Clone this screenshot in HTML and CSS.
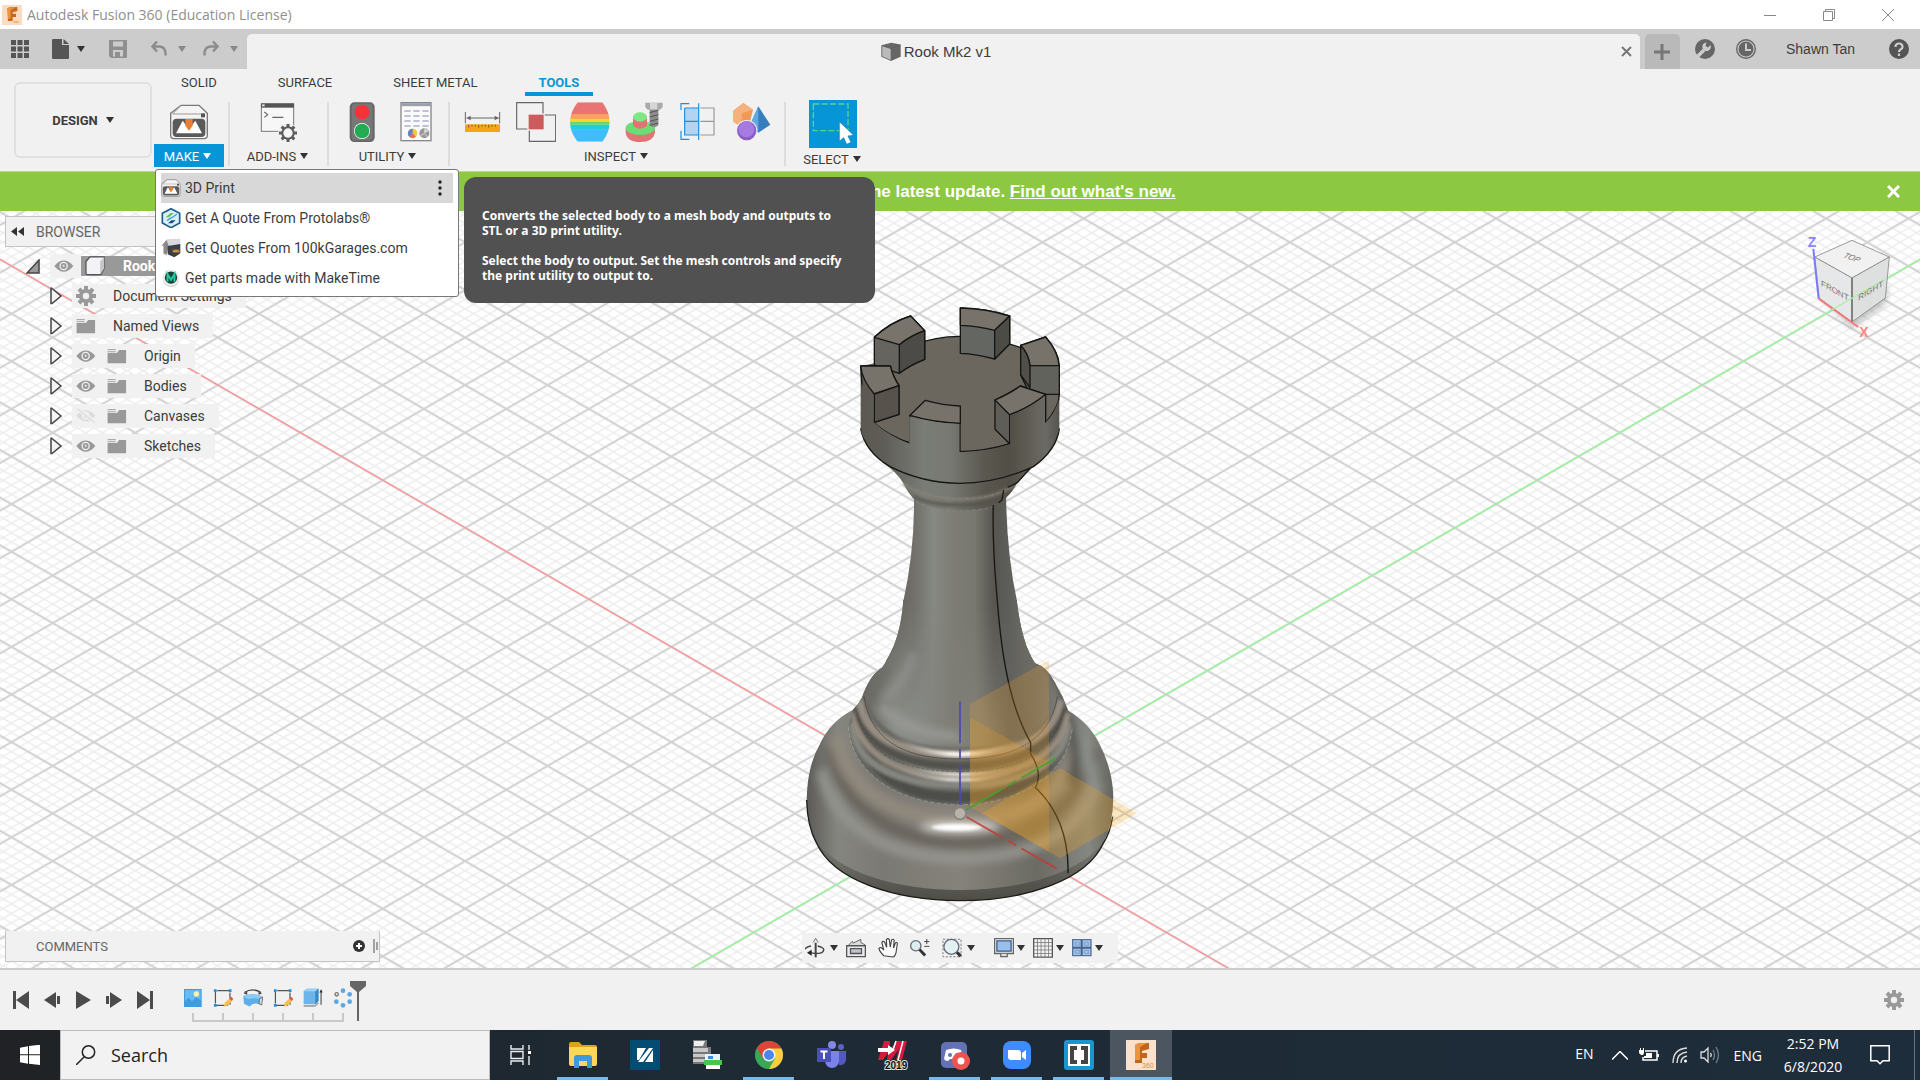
FILE: index.html
```html
<!DOCTYPE html>
<html lang="en">
<head>
<meta charset="utf-8">
<title>Autodesk Fusion 360 (Education License)</title>
<link rel="stylesheet" href="styles.css">
</head>
<body>
<svg class="defs" aria-hidden="true">
  <symbol id="eye" viewBox="228 415 62 46"><path fill="#999" d="M229 438Q258 404 288 438Q258 474 229 438Z"/><circle cx="258" cy="438" r="13" fill="#f1f1f1"/><circle cx="258" cy="438" r="9" fill="#999"/><circle cx="258" cy="437" r="3" fill="#f1f1f1"/></symbol>
  <symbol id="eye-off" viewBox="228 595 62 48"><path fill="#ddd" d="M229 618Q258 584 288 618Q258 654 229 618Z"/><circle cx="258" cy="618" r="12" fill="#f1f1f1"/><circle cx="258" cy="618" r="8" fill="#ddd"/><path d="M232 596L290 640" stroke="#f1f1f1" stroke-width="12"/><path d="M232 596L286 640" stroke="#ddd" stroke-width="4"/></symbol>
  <symbol id="folder" viewBox="320 412 66 52"><path fill="#999" d="M322 428h31l7-10h23v44h-61z"/><path d="M322 417h27M322 424h27" stroke="#999" stroke-width="3"/></symbol>
  <symbol id="gear" viewBox="0 0 20 20"><path d="M10 0v20M0 10h20M3 3l14 14M17 3L3 17" stroke="#999" stroke-width="4"/><circle cx="10" cy="10" r="5" fill="none" stroke="#999" stroke-width="4"/><circle cx="10" cy="10" r="3.2" fill="#f1f1f1"/></symbol>
  <symbol id="arrow" viewBox="0 0 14 20"><path d="M2 2.5Q2 1.500 3 2.500L12 10L3 17.500H2Z" fill="#f4f4f4" stroke="#444" stroke-width="1.500"/></symbol>
  <symbol id="printer" viewBox="510 312 120 112"><path d="M546 318h54l25 24v66q0 10-10 10h-90q-10 0-10-10v-66z" fill="#f4f4f4" stroke="#777" stroke-width="4"/><path d="M546 318l-25 26h86" fill="none" stroke="#999" stroke-width="3"/><rect x="606" y="342" width="12" height="12" fill="#555"/><rect x="521" y="358" width="98" height="55" rx="12" fill="#5a5a5a"/><path d="M531 402l20-38 19 26 19-26 20 38z" fill="#fff"/><path d="M559 359h22v20l-11 15-11-15z" fill="#e77e35"/></symbol>
  <symbol id="sketch" viewBox="634 202 66 66"><path d="M642 211h48v48h-48z" fill="none" stroke="#555" stroke-width="4" stroke-dasharray="40 8" stroke-dashoffset="-6"/><path d="M637 206h9v9h-9zM686 206h9v9h-9zM637 255h9v9h-9z" fill="#1790e6"/><path d="M670 264l3-14 18-16 9 8-18 18z" fill="#f9bd52"/><path d="M688 237l6-6 7 7-6 6z" fill="#ec4b4b"/></symbol>
</svg>

<div class="app">
  <header class="titlebar">
    <svg class="i20" viewBox="6 12 60 60"><rect x="6" y="12" width="60" height="60" fill="#fbdcc0"/><path d="M22 22l8-4h22v12l-14 4v4h10v10H38v12H24z" fill="#c9661d"/><path d="M24 22l6-3h18l-16 8v26h-8z" fill="#eb9440"/><path d="M40 63h16" stroke="#eda060" stroke-width="4"/></svg>
    <span class="apptitle">Autodesk Fusion 360 (Education License)</span>
    <div class="winctl">
      <button aria-label="Minimize"><svg class="i12" viewBox="0 0 12 12"><path d="M0 6.500h12" stroke="#888"/></svg></button>
      <button aria-label="Restore"><svg class="i12" viewBox="0 0 12 12" fill="none" stroke="#888"><path d="M.5 2.500h9v9h-9zM2.500 2.500v-2h9v9h-2"/></svg></button>
      <button aria-label="Close window"><svg class="i12" viewBox="0 0 12 12"><path d="M0 0l12 12M12 0L0 12" stroke="#888"/></svg></button>
    </div>
  </header>

  <div class="tabbar">
    <div class="quick">
      <button aria-label="Data panel"><svg class="i18" viewBox="0 0 18 18" fill="#555"><path d="M0 0h5v5H0zM6.500 0h5v5h-5zM13 0h5v5h-5zM0 6.500h5v5H0zM6.500 6.500h5v5h-5zM13 6.500h5v5h-5zM0 13h5v5H0zM6.500 13h5v5h-5zM13 13h5v5h-5z"/></svg></button>
      <button class="withcaret file" aria-label="File"><svg width="17" height="20" viewBox="0 0 17 20" fill="#555"><path d="M0 1q0-1 1-1h9v6h7v13q0 1-1 1H1q-1 0-1-1zM11.500 0L17 5h-5.500z"/></svg><i class="caret"></i></button>
      <button class="save" aria-label="Save"><svg class="i18" viewBox="0 0 18 18"><path d="M0 0h18v18H2l-2-2z" fill="#8f8f8f"/><path d="M4 1.500h10v5H4zM4 10h10v6.500H4z" fill="#ccc"/><path d="M4 8h10M6 12h5v5H6z" fill="#8f8f8f"/></svg></button>
      <button class="withcaret dim undo" aria-label="Undo"><svg width="16" height="15" viewBox="0 0 16 15" fill="none" stroke="#8c8c8c" stroke-width="2.500"><path d="M6 0.500L1.500 5.500l4.500 5M1.500 5.500H8q7 0 6.500 9"/></svg><i class="caret"></i></button>
      <button class="withcaret dim" aria-label="Redo"><svg width="16" height="15" viewBox="0 0 16 15" fill="none" stroke="#8c8c8c" stroke-width="2.500"><path d="M10 .5l4.500 5-4.500 5M14.500 5.500H8q-7 0-6.500 9"/></svg><i class="caret"></i></button>
    </div>
    <div class="doctab">
      <span class="docname"><svg class="i20" viewBox="122 124 62 60"><path d="M123 133l31-8 29 6v38l-30 13-30-13z" fill="#666"/><path d="M126 136l26 9v34l-26-12z" fill="#bbb"/><path d="M153 144l30-12" stroke="#555"/></svg>Rook Mk2 v1</span>
      <button aria-label="Close document"><svg width="11" height="11" viewBox="0 0 11 11"><path d="M1 1l9 9M10 1l-9 9" stroke="#777" stroke-width="2"/></svg></button>
    </div>
    <button class="newtab" aria-label="New design"><svg width="16" height="16" viewBox="0 0 16 16"><path d="M8 0v16M0 8h16" stroke="#777" stroke-width="3"/></svg></button>
    <div class="account">
      <button aria-label="Extensions"><svg class="i20" viewBox="0 0 20 20"><circle cx="10" cy="10" r="10" fill="#666"/><path d="M0 20l9-9" stroke="#ccc" stroke-width="3.500"/><path d="M15.500 6a4.300 4.300 0 1 1-4-2.500L10.500 7l2.500 1.500z" fill="#ccc"/></svg></button>
      <button aria-label="Job status"><svg class="i20" viewBox="0 0 20 20"><circle cx="10" cy="10" r="9.300" fill="none" stroke="#666" stroke-width="1.400"/><circle cx="10" cy="10" r="7.500" fill="#666"/><path d="M10 4.500V11h5" fill="none" stroke="#ccc" stroke-width="2"/></svg></button>
      <a href="#" class="user">Shawn Tan</a>
      <button class="help" aria-label="Help"><svg class="i20" viewBox="0 0 20 20"><circle cx="10" cy="10" r="10" fill="#555"/><path d="M6.500 8q0-3.500 3.500-3.500T13.500 8q0 1.500-2 2.500-1.500 1-1.500 2.500M10 14.500v2.500" fill="none" stroke="#ccc" stroke-width="2.200"/></svg></button>
    </div>
  </div>

  <div class="ribbon">
    <button class="workspace">DESIGN <i class="caret"></i></button>
    <div class="tools">
      <nav class="tabs"><a href="#">SOLID</a><a href="#">SURFACE</a><a href="#">SHEET METAL</a><a href="#" class="on">TOOLS</a></nav>
      <div class="groups">
        <div class="group make">
          <div class="icons"><svg class="i40" viewBox="510 308 120 120"><use href="#printer" x="510" y="312" width="120" height="112"/></svg></div>
          <button class="glabel active">MAKE<i class="caret"></i></button>
          <div class="menu">
            <button class="on"><svg class="i20" viewBox="510 308 120 120"><use href="#printer" x="510" y="312" width="120" height="112"/></svg>3D Print<svg class="dots" width="4" height="16" viewBox="0 0 4 16" fill="#222"><circle cx="2" cy="2" r="1.700"/><circle cx="2" cy="8" r="1.700"/><circle cx="2" cy="14" r="1.700"/></svg></button>
            <button><svg class="i20" viewBox="482 624 56 60"><path d="M510 626l26 14v29l-26 14-26-14v-29z" fill="#d9f0fb" stroke="#1c5f8b" stroke-width="5"/><path d="M494 652l15-13h9l-14 13z" fill="#6dbb52"/><path d="M501 670l10-9h13l-10 9z" fill="#234d78"/><path d="M498 662l14-10M512 654l16-12" stroke="#3da4d8" stroke-width="4"/></svg>Get A Quote From Protolabs&reg;</button>
            <button><svg class="i20" viewBox="482 714 60 60"><path d="M483 738l17-20 40-2v20h-20l-18 6-4 26-10-6v-23z" fill="#d6d8db"/><path d="M483 738l16-18 6 18-6 26-9-4v-24z" fill="#888"/><path d="M502 738l38-6v28l-18 12-20-9z" fill="#3d3d45"/><path d="M513 746h26v12l-20 2z" fill="#554f58"/><path d="M517 752q12-6 20 0v5h-20z" fill="#d69324"/></svg>Get Quotes From 100kGarages.com</button>
            <button><svg class="i20" viewBox="484 806 54 58"><circle cx="511" cy="837" r="24" fill="#ccc"/><circle cx="511" cy="834" r="24" fill="#eee"/><circle cx="511" cy="834" r="18" fill="#183d3a"/><path d="M501 846v-22l10 16 10-16v22" fill="none" stroke="#21c998" stroke-width="6"/></svg>Get parts made with MakeTime</button>
          </div>
        </div>
        <div class="group addins">
          <div class="icons"><svg class="i40" viewBox="778 308 120 120"><rect x="785" y="314" width="97" height="82" fill="#f7f7f7" stroke="#777" stroke-width="3"/><rect x="784" y="312" width="99" height="13" fill="#555"/><path d="M787 315h8v6h-8z" fill="#ddd"/><path d="M794 338l10 8-10 8M818 354h33" stroke="#666" stroke-width="3.500" fill="none"/><circle cx="865" cy="401" r="30" fill="#f1f1f1"/><path d="M865 374v54M838 401h54M846 382l38 38M884 382l-38 38" stroke="#5c5c5c" stroke-width="9"/><circle cx="865" cy="401" r="20" fill="#5c5c5c"/><circle cx="865" cy="401" r="14" fill="#f5f5f5"/></svg></div>
          <button class="glabel">ADD-INS<i class="caret"></i></button>
        </div>
        <div class="group utility">
          <div class="icons">
            <svg class="i40" viewBox="1027 308 120 120"><rect x="1050" y="309" width="75" height="119" rx="14" fill="#666"/><rect x="1056" y="313" width="63" height="110" rx="10" fill="#777"/><circle cx="1087" cy="338" r="22" fill="#fa3238"/><circle cx="1087" cy="395" r="24" fill="#fff"/><circle cx="1087" cy="395" r="22" fill="#22ab52"/></svg>
            <svg class="i40" viewBox="1187 308 120 120"><rect x="1202" y="310" width="90" height="114" fill="#fafafa" stroke="#888" stroke-width="4"/><path d="M1203 316h88" stroke="#9a9fb0" stroke-width="9"/><path d="M1212 335h74M1212 350h74M1212 365h74M1212 380h74" stroke="#aab0c6" stroke-width="4" stroke-dasharray="19 8"/><circle cx="1237" cy="402" r="14" fill="#f3c742"/><path d="M1237 402v-14a14 14 0 0 0-9 25z" fill="#6782c8"/><path d="M1237 402l-9 11a14 14 0 0 0 18-1z" fill="#e66a55"/><circle cx="1272" cy="402" r="15" fill="#999"/><path d="M1272 402v-15l13 8z" fill="#ddd"/><path d="M1272 402l-12 8M1272 402l10 11" stroke="#eee" stroke-width="2"/></svg>
          </div>
          <button class="glabel">UTILITY<i class="caret"></i></button>
        </div>
        <div class="group inspect">
          <div class="icons">
            <svg class="i40" viewBox="70 128 120 120"><path d="M80 158v34M183 158v34M84 176h96" stroke="#666" stroke-width="3"/><path d="M84 176l12-7v14zM180 176l-12-7v14z" fill="#666"/><rect x="79" y="195" width="105" height="23" fill="#f7a416"/><path d="M90 196v9M100 196v6M110 196v6M120 196v9M130 196v6M140 196v6M150 196v9M160 196v6M170 196v6" stroke="#6e5520" stroke-width="2.500"/></svg>
            <svg class="i40" viewBox="232 128 120 120"><path d="M234 130h79v79h-79zM272 167h79v79h-79z" fill="none" stroke="#666" stroke-width="3.500"/><path d="M266 162h52v52h-52z" fill="#f1f1f1"/><path d="M270 166h45v44h-45z" fill="#cd5b5b"/></svg>
            <svg class="i40" viewBox="394 128 120 120"><clipPath id="zebra"><path d="M417 129h74q44 60 0 118h-74q-46-58 0-118z"/></clipPath><g clip-path="url(#zebra)"><path fill="#ea7474" d="M390 128h130v38H390z"/><path fill="#fda060" d="M390 165h130v14H390z"/><path fill="#f3d826" d="M390 179h130v9H390z"/><path fill="#63d86f" d="M390 188h130v8H390z"/><path fill="#19cfe0" d="M390 196h130v15H390z"/><path fill="#41bdfd" d="M390 210h130v40H390z"/></g></svg>
            <svg class="i40" viewBox="555 128 120 120"><path d="M560 206v14q4 28 44 28 38 0 44-28v-14z" fill="#e07474"/><ellipse cx="604" cy="206" rx="44" ry="21" fill="#6edc75"/><path d="M582 172v28q20 16 42 0v-28z" fill="#e07474"/><ellipse cx="603" cy="173" rx="21" ry="14" fill="#7ee884"/><path d="M632 148h26v50q-12 12-26 0z" fill="#8c8c8c"/><path d="M632 160l26-7M632 173l26-7M632 186l26-7M632 198l26-7" stroke="#555" stroke-width="3"/><path d="M619 130h52v13l-8 8h-37l-7-8z" fill="#aaa"/><path d="M633 130h22v20h-22z" fill="#d5d5d5"/></svg>
            <svg class="i40" viewBox="716 128 120 120"><path d="M736 146h42v81h-42z" fill="#b3d3f0"/><path d="M783 146h41v81h-41M783 186h41" fill="none" stroke="#999" stroke-width="3.500"/><path d="M778 132v110M736 146h42M736 146v81h42M736 186h42M725 152v-19h25M725 214v26h25" fill="none" stroke="#1d8fe0" stroke-width="3.500"/></svg>
            <svg class="i40" viewBox="878 128 120 120"><path d="M912 131l29 20-8 33-28 18-23-15v-33z" fill="#f19a58"/><path d="M912 131l29 20-33 10-26-7zM908 161l-3 41-23-15v-33z" fill="#f5b27e"/><path d="M957 141l36 55-36 24-26-21z" fill="#367ebd"/><path d="M957 141l-26 58 26 21z" fill="#62a9e4"/><circle cx="922" cy="214" r="32" fill="#f1f1f1"/><circle cx="922" cy="214" r="29" fill="#8c5cc8"/><circle cx="921" cy="210" r="24" fill="#a57be2"/></svg>
          </div>
          <button class="glabel">INSPECT<i class="caret"></i></button>
        </div>
        <div class="group select">
          <div class="icons"><svg class="i48" viewBox="1105 117 144 144"><path fill="#0696d7" d="M1105 117h144v144h-144z"/><path d="M1118 129h104v80h-104z" fill="none" stroke="#5dd08d" stroke-width="4" stroke-dasharray="18 7"/><path d="M1196 182v59l13-11 9 20 13-6-9-19 17-2z" fill="#fff" stroke="#0f7fb4" stroke-width="2"/></svg></div>
          <button class="glabel">SELECT<i class="caret"></i></button>
        </div>
      </div>
    </div>
    <div class="tooltip" role="tooltip">
      <p>Converts the selected body to a mesh body and outputs to STL or a 3D print utility.</p>
      <p>Select the body to output. Set the mesh controls and specify the print utility to output to.</p>
    </div>
  </div>

  <div class="banner">
    <p>the latest update. <a href="#">Find out what's new.</a></p>
    <button aria-label="Dismiss"><svg width="13" height="13" viewBox="0 0 13 13"><path d="M1 1l11 11M12 1L1 12" stroke="#fff" stroke-width="3"/></svg></button>
  </div>

  <main class="viewport">
    <svg class="scene" viewBox="0 211 1920 757" preserveAspectRatio="xMidYMid slice" role="img" aria-label="Rook model on grid">
      <defs>
        <pattern id="grid" width="10" height="10" patternUnits="userSpaceOnUse" patternTransform="matrix(4.124 2.380 -4.124 2.380 960 813.500)">
          <path d="M2 0v10M4 0v10M6 0v10M8 0v10M0 2h10M0 4h10M0 6h10M0 8h10" stroke="#ededed" stroke-width=".36"/>
          <path d="M0 0v10M10 0v10M0 0h10M0 10h10" stroke="#d2d2d2" stroke-width=".5"/>
        </pattern>
        <linearGradient id="wall" x1="242" x2="838" y1="0" y2="0" gradientUnits="userSpaceOnUse"><stop offset="0" stop-color="#5b5851"/><stop offset=".12" stop-color="#5f5d57"/><stop offset=".32" stop-color="#7a7c76"/><stop offset=".45" stop-color="#777972"/><stop offset=".62" stop-color="#5b5850"/><stop offset=".75" stop-color="#514e45"/><stop offset=".93" stop-color="#6c6a64"/><stop offset="1" stop-color="#55544f"/></linearGradient>
        <linearGradient id="stem" x1="350" x2="740" y1="0" y2="0" gradientUnits="userSpaceOnUse"><stop offset="0" stop-color="#66645e"/><stop offset=".13" stop-color="#706f6a"/><stop offset=".28" stop-color="#868882"/><stop offset=".45" stop-color="#7d7b74"/><stop offset=".6" stop-color="#77776f"/><stop offset=".75" stop-color="#565550"/><stop offset=".88" stop-color="#5f605c"/><stop offset="1" stop-color="#6f6d67"/></linearGradient>
        <linearGradient id="flare" x1="250" x2="830" y1="0" y2="0" gradientUnits="userSpaceOnUse"><stop offset="0" stop-color="#6a6964"/><stop offset=".17" stop-color="#8c8e88"/><stop offset=".3" stop-color="#888a85"/><stop offset=".45" stop-color="#7f7d76"/><stop offset=".6" stop-color="#7f7f78"/><stop offset=".75" stop-color="#64635e"/><stop offset=".85" stop-color="#676661"/><stop offset="1" stop-color="#7c7c77"/></linearGradient>
        <linearGradient id="base" x1="80" x2="1000" y1="0" y2="0" gradientUnits="userSpaceOnUse"><stop offset="0" stop-color="#5b5a56"/><stop offset=".1" stop-color="#85857f"/><stop offset=".25" stop-color="#7b7973"/><stop offset=".5" stop-color="#85827b"/><stop offset=".75" stop-color="#6b6a63"/><stop offset=".92" stop-color="#858781"/><stop offset="1" stop-color="#65655f"/></linearGradient>
        <linearGradient id="shade" x1="0" x2="0" y1="1630" y2="1835" gradientUnits="userSpaceOnUse"><stop offset="0" stop-color="#4b4943" stop-opacity="0"/><stop offset="1" stop-color="#4b4943" stop-opacity=".95"/></linearGradient>
        <linearGradient id="shine" x1="200" x2="880" y1="0" y2="0" gradientUnits="userSpaceOnUse"><stop offset=".2" stop-color="#aaa69e" stop-opacity="0"/><stop offset=".46" stop-color="#fffdf8"/><stop offset=".54" stop-color="#fffdf8"/><stop offset=".75" stop-color="#aaa69e" stop-opacity="0"/></linearGradient>
        <linearGradient id="fade" x1="0" x2="0" y1="940" y2="1300" gradientUnits="userSpaceOnUse"><stop offset="0" stop-color="#fff"/><stop offset="1" stop-color="#000"/></linearGradient>
        <mask id="fadeDown" maskUnits="userSpaceOnUse" x="200" y="880" width="700" height="460"><path d="M200 880h700v460H200z" fill="url(#fade)"/></mask>
        <filter id="b3" filterUnits="userSpaceOnUse" x="0" y="400" width="1100" height="1500"><feGaussianBlur stdDeviation="4"/></filter>
        <filter id="b9" filterUnits="userSpaceOnUse" x="0" y="400" width="1100" height="1500"><feGaussianBlur stdDeviation="12"/></filter>
        <clipPath id="baseClip"><path id="baseShape" d="M370 930C365 1010 345 1070 320 1110Q312 1130 300 1138Q268 1160 245 1225Q235 1245 218 1260Q150 1295 120 1362Q82 1425 80 1530Q82 1610 110 1660C160 1770 340 1832 540 1832S920 1770 970 1660Q1000 1600 1000 1520Q998 1440 960 1365Q930 1300 865 1262Q850 1220 825 1178Q800 1130 765 1120Q725 1060 710 930Z"/></clipPath>
      </defs>
      <rect x="-2000" y="-1000" width="6000" height="4000" fill="#fff"/>
      <rect x="-2000" y="-1000" width="6000" height="4000" fill="url(#grid)"/>
      <path d="M-60 224.600L2040 1436.600" stroke="#ff9494" stroke-width="1.300"/>
      <path d="M-120 1436.600L1980 224.600" stroke="#92f892" stroke-width="1.300"/>

      <g transform="translate(780 290) scale(.33333)">
        <!-- foot and stem -->
        <use href="#baseShape" fill="url(#base)"/>
        <g clip-path="url(#baseClip)">
          <path d="M60 1560C100 1740 340 1800 540 1800S980 1740 1020 1560V1900H60Z" fill="url(#shade)"/>
          <g fill="none" filter="url(#b9)">
            <path d="M150 1370C170 1560 380 1660 540 1660S870 1600 950 1380" stroke="#68645b" stroke-width="34"/>
            <path d="M170 1340C190 1510 370 1590 540 1590S840 1540 890 1370" stroke="#91897e" stroke-width="44"/>
            <path d="M125 1440C160 1620 340 1705 540 1705S900 1640 950 1480" stroke="#94948f" stroke-width="32"/>
            <path d="M860 1290Q950 1380 930 1540" stroke="#8d918c" stroke-width="30"/>
            <path d="M850 1260Q910 1380 870 1480" stroke="#55544f" stroke-width="30"/>
          </g>
          <ellipse cx="540" cy="1610" rx="120" ry="17" fill="#d8d5cf" filter="url(#b9)"/>
          <ellipse cx="530" cy="1612" rx="75" ry="10" fill="#fff" filter="url(#b3)"/>
          <!-- rings above the foot -->
          <path d="M205 1310C215 1460 370 1545 540 1545S865 1460 877 1310L830 1150L540 900L250 1150Z" fill="#666661"/>
          <g fill="none" filter="url(#b3)">
            <path d="M235 1340C290 1480 410 1522 540 1522S800 1480 850 1340" stroke="#4e4d48" stroke-width="30"/>
            <path d="M215 1300C225 1440 380 1486 540 1486S855 1440 865 1300" stroke="#85867f" stroke-width="20"/>
            <path d="M222 1270C235 1410 390 1461 540 1461S850 1410 862 1270" stroke="#968c80" stroke-width="18"/>
            <path d="M230 1250C245 1385 400 1428 540 1428S830 1385 850 1250" stroke="#52514c" stroke-width="20"/>
            <path d="M240 1230C255 1360 400 1394 540 1394S820 1360 840 1230" stroke="#978e83" stroke-width="24"/>
          </g>
          <path d="M370 900C365 1010 345 1070 320 1110Q270 1150 255 1220Q290 1330 420 1362Q540 1385 660 1362Q800 1330 835 1230Q820 1160 765 1120Q725 1060 710 900Z" fill="url(#flare)" filter="url(#b3)"/>
          <path d="M250 900H830V1330H250Z" fill="url(#stem)" mask="url(#fadeDown)"/>
          <g fill="none" filter="url(#b9)"><path d="M300 1250Q400 1338 540 1340" stroke="#999a96" stroke-width="26"/><path d="M400 1090Q375 1180 310 1230" stroke="#8f918c" stroke-width="24"/><path d="M320 1130Q285 1180 268 1240" stroke="#6b6a65" stroke-width="18"/></g>
          <g fill="none" stroke="url(#shine)" filter="url(#b3)"><path d="M260 1250C330 1360 430 1393 540 1393S780 1350 830 1250" stroke-width="14"/><path d="M240 1310C310 1420 430 1453 540 1453S770 1430 840 1310" stroke-width="8"/><path d="M240 1330C310 1440 430 1470 540 1470S770 1450 840 1330" stroke-width="8"/></g>
          <g fill="none" stroke="#34322e" stroke-width="2"><path d="M252 1220C275 1370 400 1407 540 1407S810 1365 832 1220" stroke-opacity=".8"/><path d="M232 1270C260 1410 400 1445 540 1445S820 1410 850 1260" stroke-dasharray="10 5" stroke-opacity=".5"/><path d="M205 1310C215 1460 370 1544 540 1544S865 1460 877 1310" stroke="#c9c7c0" stroke-opacity=".6" stroke-dasharray="14 6"/></g>
        </g>
        <path d="M80 1530Q82 1610 110 1660C160 1770 340 1832 540 1832S920 1770 970 1660Q990 1630 998 1580" fill="none" stroke="#1b1b19" stroke-width="4"/>
        <path d="M402 620Q404 780 370 934H711Q680 790 678 610Z" fill="url(#stem)"/>
        <!-- collar -->
        <path d="M305 515Q350 545 370 580Q385 612 405 630Q450 662 540 662T676 625Q700 605 710 580L780 510Z" fill="url(#wall)"/>
        <path d="M370 582Q440 628 540 628T706 585" fill="none" stroke="#857f75" stroke-width="7" filter="url(#b3)"/>
        <path d="M400 620Q450 645 540 645T676 620" fill="none" stroke="#53514b" stroke-width="8" filter="url(#b3)"/>
        <path d="M408 634Q450 660 540 661T650 642M372 582Q440 625 540 626T690 590" fill="none" stroke="#99958b" stroke-opacity=".6" stroke-width="2" stroke-dasharray="12 7"/>
        <path d="M750 535L712 578L683 592M671 600L666 630L656 638M640 645C636 760 646 860 652 934C665 1100 690 1250 752 1358L752 1392Q790 1450 766 1492Q868 1590 864 1750" fill="none" stroke="#171715" stroke-width="4"/>
        <!-- head -->
        <path d="M242 228V420C250 460 280 500 330 530Q430 580 540 580T760 530Q830 480 838 420V228L540 170Z" fill="url(#wall)"/>
        <path d="M242 415C250 460 280 500 330 530Q430 580 540 580T760 530Q830 480 838 415" fill="none" stroke="#151513" stroke-width="4"/>
        <g stroke="#151513" stroke-width="4" stroke-linejoin="round">
          <path d="M283 400Q330 440 390 459V376L540 400V485Q620 483 689 461L798 397Q838 350 838 313L720 172Q540 110 400 165L300 230Z" fill="#6b665e"/>
          <path d="M283 142Q330 97 392 78L434 122V208Q390 225 358 250L283 225Z" fill="#65645e"/><path d="M283 142Q330 97 392 78L434 122Q390 138 358 164Z" fill="#78746b"/><path d="M434 122V208Q390 225 358 250V164Q390 138 434 122Z" fill="#4c4b47"/>
          <path d="M541 54Q620 56 689 78V162L644 207Q590 192 541 190Z" fill="#646661"/><path d="M541 54Q620 56 689 78L644 121Q590 107 541 106Z" fill="#77736a"/><path d="M689 78V162L644 207V121Z" fill="#4d4b46"/>
          <path d="M722 166L797 141Q838 190 838 228V313H750L722 255Z" fill="#62625d"/><path d="M722 166L797 141Q835 185 837 227H750Q746 192 722 166Z" fill="#77736a"/><path d="M722 166Q746 192 750 227V293L722 255Z" fill="#514f4a"/>
          <path d="M242 228H331Q340 262 357 287V373L283 397L250 350Z" fill="#5c5952"/><path d="M242 228H331Q340 262 357 287L283 312Q246 270 242 228Z" fill="#78736a"/><path d="M357 287V373L283 397V312Z" fill="#57524b"/>
          <path d="M390 376L436 331Q490 346 541 348V400Q460 397 390 376Z" fill="#77736a"/>
          <path d="M645 330Q690 310 721 288L797 313V398V313Q750 352 689 374V461L645 418Z" fill="#5f5d57"/><path d="M645 330Q690 310 721 288L797 313Q750 352 689 374Z" fill="#77736a"/>
        </g>
        <path d="M244 280Q250 300 281 315V397Q330 440 388 461V380Q460 399 538 402V487Q620 485 691 463V376Q750 354 795 317V400Q825 370 836 330V425Q780 540 540 576Q300 545 244 430Z" fill="url(#wall)"/>
        <!-- construction planes and axes -->
        <g fill="#f5a623" fill-opacity=".22"><path d="M570 1242L807 1110V1420L570 1555Z"/><path d="M570 1282L807 1415V1685L570 1550Z"/><path d="M605 1570L840 1435L1072 1570L840 1705Z" fill-opacity=".27"/></g>
        <g stroke-width="6" fill="none" stroke-opacity=".85"><path d="M540 1235V1545" stroke="#4b48ae" stroke-dasharray="125 16 30 16 200"/><path d="M560 1558L830 1403" stroke="#45a02b" stroke-dasharray="125 18 28 18 200"/><path d="M560 1581L830 1736" stroke="#bd4038" stroke-dasharray="125 18 28 18 200"/></g>
        <circle cx="540" cy="1570" r="18" fill="#b7b2aa" stroke="#89857d" stroke-width="5"/>
      </g>
    </svg>

    <svg class="viewcube" viewBox="730 700 270 330" role="img" aria-label="View cube">
      <defs><filter id="cs"><feGaussianBlur stdDeviation="9"/></filter></defs>
      <path d="M790 900L877 985L975 915L985 860Z" fill="#777" opacity=".45" filter="url(#cs)"/>
      <g stroke="#888" stroke-width="2.500"><path d="M765 772L877 722L989 772L877 835Z" fill="#f1f1f1"/><path d="M765 772L877 835V967L778 895Z" fill="#e6e7e8"/><path d="M877 835L989 772L977 895L877 967Z" fill="#dedfdf"/></g>
      <path d="M877 835V967" stroke="#777" stroke-width="5"/><path d="M761 748L777 897" stroke="#7a7aff" stroke-width="6"/><path d="M777 897L896 982" stroke="#f27b7b" stroke-width="6"/><path d="M815 931L975 840" stroke="#a8efa8" stroke-width="4"/>
      <g font-family="Liberation Sans" fill="#747474"><text transform="translate(784 858) skewY(29)" font-size="24">FRONT</text><text transform="translate(896 903) skewY(-31)" font-size="24">RIGHT</text><text transform="translate(848 772) rotate(20) skewX(-25)" font-size="24">TOP</text><text x="744" y="743" font-size="42" font-weight="700" fill="#8787ff">Z</text><text x="899" y="1012" font-size="42" font-weight="700" fill="#ff8484">X</text></g>
    </svg>

    <aside class="browser">
      <div class="panelhead"><svg width="13" height="9" viewBox="0 0 13 9"><path d="M6 0v9L0 4.500zM13 0v9L7 4.500z" fill="#333"/></svg><span>BROWSER</span></div>
      <ul class="tree">
        <li class="root"><svg width="14" height="15" viewBox="0 0 14 15"><path d="M13 1v13H1z" fill="#999" stroke="#444" stroke-width="1.500"/></svg><span class="rooteye"><svg class="i20"><use href="#eye"/></svg></span><span class="rootname"><svg class="i20" viewBox="254 768 62 60"><path d="M257 784l12-14h44v36l-10 19h-41q-5 0-5-5z" fill="#f3f3f7" stroke="#555" stroke-width="4"/><path d="M301 784v40l12-18v-36z" fill="#c5c6cc"/></svg>Rook Mk2 v1</span></li>
        <li><svg class="arrow"><use href="#arrow"/></svg><span class="node"><svg class="i20"><use href="#gear"/></svg>Document Settings</span></li>
        <li><svg class="arrow"><use href="#arrow"/></svg><span class="node"><svg class="i20"><use href="#folder"/></svg>Named Views</span></li>
        <li><svg class="arrow"><use href="#arrow"/></svg><span class="node"><svg class="i20 vis"><use href="#eye"/></svg><svg class="i20"><use href="#folder"/></svg>Origin</span></li>
        <li><svg class="arrow"><use href="#arrow"/></svg><span class="node"><svg class="i20 vis"><use href="#eye"/></svg><svg class="i20"><use href="#folder"/></svg>Bodies</span></li>
        <li><svg class="arrow"><use href="#arrow"/></svg><span class="node"><svg class="i20 vis"><use href="#eye-off"/></svg><svg class="i20"><use href="#folder"/></svg>Canvases</span></li>
        <li><svg class="arrow"><use href="#arrow"/></svg><span class="node"><svg class="i20 vis"><use href="#eye"/></svg><svg class="i20"><use href="#folder"/></svg>Sketches</span></li>
      </ul>
    </aside>

    <div class="comments"><span>COMMENTS</span><button aria-label="Add comment"><svg width="12" height="12" viewBox="0 0 12 12"><circle cx="6" cy="6" r="6" fill="#333"/><path d="M6 3v6M3 6h6" stroke="#fff" stroke-width="2"/></svg></button><svg width="5" height="14" viewBox="0 0 5 14"><path d="M1 0v14M4 3v8" stroke="#888" stroke-width="1.500"/></svg></div>

    <div class="navbar">
      <button class="orbit" aria-label="Orbit"><svg class="i20" viewBox="74 54 60 60" fill="none" stroke="#444" stroke-width="4"><path d="M106 58v54" stroke-width="6"/><path d="M98 68l8-13 8 13" fill="#eee" stroke-width="2"/><path d="M92 78q-17 4-17 10M84 98q48 8 46-10-2-6-18-10"/><path d="M80 98l14-9v18z" fill="#222" stroke="none"/></svg><i class="caret"></i></button>
      <button aria-label="Look at"><svg class="i20" viewBox="197 54 62 62"><path d="M205 76l12-12 2 6 24-12v10l14 8" fill="#d8dde0" stroke="#666" stroke-width="3"/><path d="M199 78h58v34h-58z" fill="#e9eaec" stroke="#555" stroke-width="4"/><path d="M211 87h34v15h-34z" fill="#bfc2ca" stroke="#555" stroke-width="4"/></svg></button>
      <button aria-label="Pan"><svg class="i20" viewBox="296 53 60 62"><path d="M313 108q-14-14-15-23 6-6 15 6l-6-24q4-7 9 0l6 15-1-24q5-6 9 0l3 23 4-22q6-5 8 1l-2 24 6-16q6-3 6 2l-4 28q-3 12-9 14z" fill="#fafafa" stroke="#444" stroke-width="3.500"/></svg></button>
      <button aria-label="Zoom"><svg class="i20" viewBox="392 53 62 60"><path d="M420 86l19 20" stroke="#333" stroke-width="9"/><circle cx="410" cy="76" r="16" fill="#dcefee" stroke="#667" stroke-width="4"/><path d="M436 63h16M444 55v16M436 78h16" stroke="#444" stroke-width="3"/></svg></button>
      <button aria-label="Fit"><svg class="i20" viewBox="488 53 64 62"><path d="M491 56h58v56h-58z" fill="none" stroke="#777" stroke-width="3" stroke-dasharray="7 5"/><path d="M534 96l14 14" stroke="#333" stroke-width="10"/><circle cx="518" cy="80" r="24" fill="#e2f2f2" stroke="#667" stroke-width="4"/></svg><i class="caret"></i></button>
      <button class="gap" aria-label="Display settings"><svg class="i20" viewBox="643 53 62 62"><path d="M645 55h58v46h-58z" fill="#f3f3f3" stroke="#666" stroke-width="4"/><path d="M652 62h44v32h-44z" fill="#99c0ec" stroke="#3d5c86" stroke-width="4"/><path d="M664 102v9h20v-9" fill="#ddd" stroke="#666" stroke-width="4"/></svg><i class="caret"></i></button>
      <button aria-label="Grid and snaps"><svg class="i20" viewBox="759 53 62 62"><path d="M761 55h58v57h-58z" fill="#f5f5f8" stroke="#555" stroke-width="4"/><path d="M773 55v57M784 55v57M796 55v57M807 55v57M761 67h58M761 78h58M761 90h58M761 101h58" stroke="#777" stroke-width="2.500"/></svg><i class="caret"></i></button>
      <button aria-label="Viewports"><svg class="i20" viewBox="875 53 60 60"><path d="M877 58h55v48h-55z" fill="#a2c3ec" stroke="#5a7396" stroke-width="4"/><path d="M904 58v48M877 82h55" stroke="#48648b" stroke-width="6"/><path d="M885 66h12v9h-12zM912 66h12v9h-12zM885 90h12v9h-12zM912 90h12v9h-12z" fill="none" stroke="#6d90bf" stroke-width="2"/></svg><i class="caret"></i></button>
    </div>
  </main>

  <footer class="timeline">
    <div class="play">
      <button aria-label="Go to start"><svg viewBox="0 0 16 18"><path d="M0 0h3v18H0zM16 0v18L3 9z"/></svg></button>
      <button aria-label="Step back"><svg viewBox="0 0 16 18"><path d="M12 1v16L0 9zM13 5h3v8h-3z"/></svg></button>
      <button aria-label="Play"><svg viewBox="0 0 16 18"><path d="M1 0l15 9L1 18z"/></svg></button>
      <button aria-label="Step forward"><svg viewBox="0 0 16 18"><path d="M4 1v16l12-8zM0 5h3v8H0z"/></svg></button>
      <button aria-label="Go to end"><svg viewBox="0 0 16 18"><path d="M13 0h3v18h-3zM0 0v18l13-9z"/></svg></button>
    </div>
    <div class="features">
      <button aria-label="Canvas"><svg class="i20" viewBox="549 206 58 60"><path fill="#3d9be0" d="M551 209h53v54h-53z"/><path fill="#65bbf4" d="M554 212h47v30l-14-8-12 12-11-12-10 14z"/><circle cx="588" cy="224" r="8" fill="#fff3a8"/></svg></button>
      <button aria-label="Sketch"><svg class="i20"><use href="#sketch"/></svg></button>
      <button aria-label="Revolve"><svg class="i20" viewBox="726 206 62 60"><path d="M730 219q26-16 52 0" stroke="#444" stroke-width="4" fill="none"/><path d="M728 222l11-5v9zM785 222l-11-5v9z" fill="#444"/><path d="M727 230q30-12 61 2l-5 26-12-4q-14-4-25 8l-17-8z" fill="#5cade8"/><path d="M727 230q30-12 61 2l-12 8q-18-6-34 0z" fill="#8acbf5"/><path d="M777 238l10-4-3 24-8-4z" fill="#ddd" stroke="#444" stroke-width="2"/></svg></button>
      <button aria-label="Sketch"><svg class="i20"><use href="#sketch"/></svg></button>
      <button aria-label="Extrude"><svg class="i20" viewBox="906 204 62 62"><path d="M908 214l10-8h36v38l-10 10h-36z" fill="#6bb5ec"/><path d="M908 214l10-8h36l-10 9z" fill="#98d0f6"/><path d="M944 215l10-9v38l-10 10z" fill="#3789c4"/><path d="M908 260h34l12-10" fill="none" stroke="#aaa" stroke-width="6"/><path d="M962 256v-44" stroke="#333" stroke-width="3"/><path d="M957 218l5-10 5 10z" fill="#333"/></svg></button>
      <button aria-label="Circular pattern"><svg class="i20" viewBox="998 206 58 60" fill="#5aa7e2"><circle cx="1027" cy="214" r="7"/><circle cx="1047" cy="225" r="7"/><circle cx="1047" cy="247" r="7"/><circle cx="1027" cy="258" r="7"/><circle cx="1007" cy="247" r="7"/><circle cx="1008" cy="225" r="5" fill="none" stroke="#777" stroke-width="4"/></svg></button>
      <svg class="marker" width="16" height="40" viewBox="0 0 16 40"><path d="M0 0h16v5L9 11v29H7V11L0 5z" fill="#666"/></svg>
      <svg class="bracket" width="152" height="9" viewBox="0 0 152 9"><path d="M1 0v8h150V0M31 0v8M61 0v8M91 0v8M121 0v8" fill="none" stroke="#c9c9c9" stroke-width="2"/></svg>
    </div>
    <button class="settings" aria-label="Timeline settings"><svg class="i20"><use href="#gear"/></svg></button>
  </footer>

  <div class="taskbar">
    <button class="start" aria-label="Start"><svg class="i20" viewBox="60 375 60 60" fill="#fff"><path d="M60 383l24-4v24H60zM87 378l33-4v29H87zM60 406h24v25l-24-4zM87 406h33v29l-33-4z"/></svg></button>
    <label class="search"><svg class="i20" viewBox="0 0 20 20" fill="none" stroke="#222" stroke-width="1.500"><circle cx="12.500" cy="7" r="6.200"/><path d="M8 12L0 20"/></svg><input type="text" placeholder="Search" aria-label="Search"></label>
    <nav class="apps">
      <button aria-label="Task view"><svg width="22" height="20" viewBox="0 0 22 20" fill="none" stroke="#eee" stroke-width="1.400"><path d="M1 0v4h12V0M1 20v-4h12v4M1 6.500h12v7H1zM19 0v5M19 11v9"/><path d="M18 6h3v3h-3z" fill="#fff" stroke="none"/></svg></button>
      <button class="run" aria-label="File Explorer"><svg class="i28" viewBox="0 0 28 28"><path d="M0 3q0-2 2-2h8l3 3h13q2 0 2 2v6H0z" fill="#dda11c"/><path d="M0 6h28v17q0 2-2 2H2q-2 0-2-2z" fill="#ffd65c"/><path d="M5 27V17q0-3 3-3h12q3 0 3 3v10h-5v-7h-8v7z" fill="#3f98dc"/></svg></button>
      <button aria-label="Trading app"><svg class="i30" viewBox="0 0 30 30"><path fill="#034d74" d="M0 0h30v30H0z"/><path d="M7 8h9L9 20H7zM19 8h4L13 22H8zM23 10v12h-8z" fill="#fff"/></svg></button>
      <button aria-label="Printer"><svg class="i30" viewBox="0 0 30 30"><path d="M1 0h14v7h4v17H1z" fill="#777"/><path d="M2 1h11l-2 5H2z" fill="#eee"/><path d="M1 8h15v4H1zM1 14h12v3H1zM1 19h12v3H1z" fill="#c8c8c8"/><path d="M13 14h15v9H13z" fill="#e7f3fa"/><path d="M12 20h18v5H12z" fill="#4bc44c"/><path d="M14 25h14v4H14z" fill="#fff"/><path d="M16 16h5v3h-5z" fill="#3d8edc"/></svg></button>
      <button class="run" aria-label="Chrome"><svg class="i28" viewBox="0 0 28 28"><circle cx="14" cy="14" r="14" fill="#3aa757"/><path d="M14 14L1.900 7A14 14 0 0 1 26.100 7z" fill="#db4437"/><path d="M14 7.500h12.400A14 14 0 0 1 14 28l6-10.500z" fill="#ffcd40"/><path d="M2 7l6 10.500L14 14V7z" fill="#db4437"/><circle cx="14" cy="14" r="6.500" fill="#f5f5f5"/><circle cx="14" cy="14" r="5" fill="#4a86ee"/></svg></button>
      <button aria-label="Teams"><svg class="i30" viewBox="0 0 30 30"><circle cx="16" cy="5" r="4" fill="#8388e2"/><circle cx="25" cy="7" r="3" fill="#5d62c4"/><path d="M20 11h10v9q-1 6-7 5z" fill="#5259bd"/><path d="M9 11h14v10q-1 7-7 7t-7-7z" fill="#7b83eb"/><path d="M1 8h14v14H1z" fill="#4a51b5"/><path d="M4.500 11.500h7M8 11.500V19" stroke="#fff" stroke-width="2"/></svg></button>
      <button aria-label="Mastercam 2019"><svg class="i30" viewBox="0 0 30 30"><path d="M6 1h6v9l6-9h11l-5 19h-6l3-11-8 11H9l1-7-5 7H0z" fill="#d61940"/><path d="M25 1l-5 19M18 1l-3 9" stroke="#fff" stroke-width="1.500"/><path d="M0 8h10V5l7 5-7 5v-3H0z" fill="#fff"/><text x="7" y="29" font-family="Liberation Sans" font-size="10" font-weight="700" fill="#111" stroke="#ddd" stroke-width="2" paint-order="stroke">2019</text></svg></button>
      <button class="run" aria-label="Discord"><svg class="i30" viewBox="0 0 30 30"><rect x="1" y="2" width="26" height="26" rx="5" fill="#6372b5"/><path d="M6 10q8-3 15 0l3 10q-3 2-5 1l-2-2h-7l-2 2q-3 0-4-2z" fill="#fff"/><circle cx="10" cy="15" r="2" fill="#6372b5"/><circle cx="17" cy="15" r="2" fill="#6372b5"/><circle cx="21" cy="21" r="9" fill="#ef5350"/><circle cx="21" cy="21" r="3.500" fill="#fff"/></svg></button>
      <button class="run" aria-label="Zoom meeting"><svg class="i28" viewBox="0 0 28 28"><rect width="28" height="28" rx="8" fill="#3f8cff"/><path d="M5 9h10q3 0 3 3v7H8q-3 0-3-3zM19 12l4-3v10l-4-3z" fill="#fff"/></svg></button>
      <button class="run" aria-label="Brackets"><svg class="i30" viewBox="0 0 30 30"><rect width="30" height="30" rx="3" fill="#1996d0"/><path fill="#fff" d="M4 4h22v22H4z"/><path d="M6 6h7v4h-3v10h3v4H6zM24 6h-7v4h3v10h-3v4h7z" fill="#454545"/></svg></button>
      <button class="run current" aria-label="Fusion 360"><svg class="i30" viewBox="0 0 30 30"><path fill="#fbe0cb" d="M0 0h30v30H0z"/><path d="M9 5l4-2h10v6l-7 2v2h5v5h-5v5H9z" fill="#bf651d"/><path d="M9 5l4-2h8l-7 4v13H9z" fill="#eb9440"/><text x="16" y="28" font-family="Liberation Sans" font-size="7" fill="#e08d45">360</text></svg></button>
    </nav>
    <div class="tray">
      <span class="lang">EN</span>
      <svg width="16" height="9" viewBox="0 0 16 9"><path d="M0 8.500l8-8 8 8" fill="none" stroke="#fff" stroke-width="1.500"/></svg>
      <svg class="batt" width="20" height="14" viewBox="0 0 20 14"><path d="M6 3h12v9H4V9" fill="none" stroke="#fff" stroke-width="1.500"/><path d="M7 5h6v5H5V8h2zM18 6h2v3h-2zM0 2h5v3l-1 2H2L0 5zM1 0h1v2H1zM4 0h1v2H4z" fill="#fff"/></svg>
      <svg class="wifi" width="16" height="16" viewBox="0 0 16 16" fill="none" stroke="#ddd" stroke-width="1.400"><path d="M1 16Q1 2 15 1M5 16Q5 6 15 5M9 16q0-6 6-7"/><circle cx="13.500" cy="14" r="1.500" fill="#fff" stroke="none"/></svg>
      <svg class="vol" width="20" height="18" viewBox="0 0 20 18" fill="none" stroke="#ddd" stroke-width="1.300"><path d="M1 6h3l4-4v14l-4-4H1zM10.500 7q1.500 2 0 4"/><path d="M13 4q3 5 0 10M16 1q5 8 0 16" stroke="#75808a"/></svg>
      <span class="eng">ENG</span>
      <div class="clock"><time>2:52 PM</time><time>6/8/2020</time></div>
      <svg class="i20 note" viewBox="0 0 20 20"><path d="M.8.800h18.400v15H13l-3 3-3-3H.8z" fill="none" stroke="#fff" stroke-width="1.500"/></svg>
      <i class="desk"></i>
    </div>
  </div>
</div>
</body>
</html>
```
FILE: styles.css
```css
* { box-sizing: border-box; }
body { margin: 0; font-family: "Liberation Sans", Arial, sans-serif; font-size: 14px; color: #3c3c3c; }
button { font: inherit; color: inherit; background: none; border: 0; padding: 0; display: flex; align-items: center; }
a { color: inherit; text-decoration: none; }
p { margin: 0; }
svg { display: block; flex: none; }
.defs { position: absolute; width: 0; height: 0; }
.i12 { width: 12px; height: 12px; }
.i18 { width: 18px; height: 18px; }
.i20 { width: 20px; height: 20px; }
.i28 { width: 28px; height: 28px; }
.i30 { width: 30px; height: 30px; }
.i40 { width: 40px; height: 40px; }
.i48 { width: 48px; height: 48px; }
.caret { border: 4px solid transparent; border-top: 6px solid #333; border-bottom: 0; width: 0; height: 0; }

.app { display: flex; flex-direction: column; min-height: 100vh; background: #f1f1f1; overflow: hidden; }

.titlebar { display: flex; align-items: center; height: 29px; padding-left: 2px; gap: 5px; background: #fff; }
.apptitle { font-family: "Open Sans", sans-serif; font-size: 14px; color: #8f8f8f; }
.winctl { margin-left: auto; display: flex; gap: 47px; padding-right: 26px; }

.tabbar { display: flex; height: 40px; padding-top: 5px; background: #ccc; }
.quick { display: flex; align-items: center; width: 247px; padding: 0 10px 6px 11px; }
.withcaret { gap: 8px; }
.file { margin-left: 23px; }
.save { margin-left: 24px; }
.undo { margin: 0 17px 0 24px; }
.withcaret.dim { gap: 11px; }
.dim .caret { border-top-color: #888; }
.doctab { flex: 1; display: flex; align-items: center; justify-content: center; position: relative; padding-right: 8px; background: #f1f1f1; border-radius: 5px 5px 0 0; }
.docname { display: flex; align-items: center; justify-content: center; gap: 3px; flex: 1; padding-left: 4px; font-size: 15px; }
.newtab { width: 35px; margin-left: 5px; justify-content: center; background: #b9b9b9; border-radius: 5px 5px 0 0; }
.account { display: flex; align-items: center; padding: 0 11px 5px 15px; gap: 21px; }
.user { padding: 0 13px 0 9px; }

.ribbon { position: relative; z-index: 2; display: flex; height: 103px; padding-left: 14px; border-bottom: 1px solid #c8c8c8; }
.workspace { width: 138px; height: 76px; margin: 13px 2px 0 0; justify-content: center; gap: 8px; border: 2px solid #e0e0e0; border-radius: 6px; font: 700 13px Roboto, sans-serif; }
.tabs { display: flex; gap: 33px; padding-left: 13px; height: 33px; font: 13px/16px Roboto, sans-serif; }
.tabs a { height: 27px; padding: 6px 14px 0; }
.tabs .on { color: #0696d7; font-weight: 700; border-bottom: 4px solid #0696d7; }
.groups { display: flex; }
.group { position: relative; display: flex; flex-direction: column; align-items: center; height: 64px; border-right: 2px solid #ddd; }
.icons { display: flex; gap: 14px; height: 45px; align-items: center; padding-bottom: 2px; }
.glabel { height: 23px; flex: none; gap: 4px; padding: 1px 2px 0 0; font: 13px Roboto, sans-serif; }
.make { width: 76px; padding-right: 5px; }
.addins { width: 99px; }
.utility { width: 121px; }
.inspect { width: 336px; }
.select { width: 94px; border: 0; }
.active { width: 70px; justify-content: center; background: #0696d7; color: #fff; }
.active .caret { border-top-color: #fff; }

.menu { position: absolute; top: 67px; left: 1px; width: 304px; padding: 3px 5px; background: #fff; border: 1px solid #777; border-radius: 3px; font: 14px Roboto, sans-serif; }
.menu button { width: 100%; height: 30px; gap: 4px; padding-right: 11px; white-space: nowrap; }
.menu .on { background: #d8d8d8; }
.dots { margin-left: auto; }
.tooltip { position: absolute; left: 464px; top: 108px; width: 411px; padding: 31px 30px 20px 18px; border-radius: 12px; background: #515151; color: #fff; font: 700 12px/15px "Noto Sans", sans-serif; }
.tooltip p + p { margin-top: 15px; }

.banner { display: flex; align-items: center; height: 39px; background: #8dc843; color: #fff; font-size: 17px; font-weight: 700; }
.banner p { flex: 1; text-align: center; padding-left: 154px; }
.banner a { text-decoration: underline; }
.banner button { margin-right: 20px; }

.viewport { position: relative; flex: 1; min-height: 500px; }
.scene { position: absolute; inset: 0; width: 100%; height: 100%; }
.viewcube { position: absolute; right: 27px; top: 22px; width: 90px; height: 110px; }
.browser { position: absolute; left: 5px; top: 5px; width: 375px; }
.panelhead { display: flex; align-items: center; gap: 12px; height: 31px; padding-left: 5px; background: #f1f1f1; border: 1px solid #c4c4c4; color: #666; font: 14px Roboto, sans-serif; }
.tree { list-style: none; margin: 4px 0 0; padding: 0; font-family: Roboto, sans-serif; }
.tree li { display: flex; align-items: center; height: 30px; padding-left: 44px; gap: 9px; }
.arrow { width: 14px; height: 20px; }
.node { display: flex; align-items: center; height: 24px; padding: 0 14px 0 4px; gap: 17px; background: #f1f1f1; }
.vis { margin-right: -6px; }
.tree .root { padding-left: 21px; gap: 10px; }
.rooteye { display: flex; align-items: center; width: 31px; height: 24px; padding-left: 4px; margin-right: -10px; background: #f1f1f1; }
.rootname { display: flex; align-items: center; gap: 18px; height: 20px; padding: 0 14px 0 4px; background: #999; color: #fff; font-weight: 700; }

.comments { position: absolute; left: 5px; bottom: 6px; width: 375px; height: 31px; display: flex; align-items: center; padding: 0 1px 0 30px; background: #f1f1f1; border: 1px solid #c4c4c4; border-top: 0; color: #666; font: 13px Roboto, sans-serif; }
.comments button { margin: 0 8px 0 auto; }
.navbar { position: absolute; bottom: 5px; left: 50%; width: 316px; height: 30px; transform: translateX(-50%); display: flex; align-items: center; gap: 12px; padding-left: 3px; background: #f1f1f1; }
.navbar button { gap: 5px; }
.navbar .orbit { margin-right: -4px; }
.navbar button:nth-child(n+6) { gap: 3px; margin-right: -4px; }
.navbar .gap { margin-left: 7px; }

.timeline { display: flex; height: 62px; padding: 0 16px 0 13px; border-top: 2px solid #ccc; }
.play { display: flex; gap: 15px; align-items: center; }
.play svg { width: 16px; height: 18px; fill: #4b4b4b; }
.features { position: relative; display: flex; align-items: center; gap: 10px; margin-left: 30px; padding-bottom: 4px; }
.marker { margin: 6px 0 0 -13px; }
.bracket { position: absolute; left: 9px; top: 43px; }
.settings { margin-left: auto; }

.taskbar { display: flex; height: 50px; background: linear-gradient(90deg, #202225, #1e2a34 35%, #1e2d3b); color: #fff; }
.start { width: 60px; justify-content: center; }
.search { display: flex; align-items: center; width: 430px; gap: 15px; padding-left: 15px; background: #f2f2f2; border: 1px solid #bbb; }
.search input { flex: 1; min-width: 0; border: 0; background: none; padding: 0; font: 18px "Open Sans", sans-serif; color: #222; }
.search input::placeholder { color: #222; opacity: 1; }
.apps { display: flex; }
.apps button { width: 62px; justify-content: center; position: relative; }
.apps .run::after { content: ""; position: absolute; left: 5px; right: 6px; bottom: 0; height: 3px; background: #76b9ed; }
.apps .current { background: #4b5660; }
.apps .current::after { left: 0; right: 0; }
.tray { display: flex; align-items: center; margin-left: auto; padding-right: 5px; font: 14px "Open Sans", sans-serif; }
.lang { margin-right: 18px; padding-bottom: 4px; }
.batt { margin-left: 11px; }
.wifi { margin-left: 13px; }
.vol { margin-left: 12px; }
.eng { margin-left: 14px; }
.clock { display: flex; flex-direction: column; width: 102px; margin-right: 6px; text-align: center; line-height: 23px; }
.note { margin-right: 24px; }
.desk { width: 1px; height: 50px; background: #69747d; }
```
